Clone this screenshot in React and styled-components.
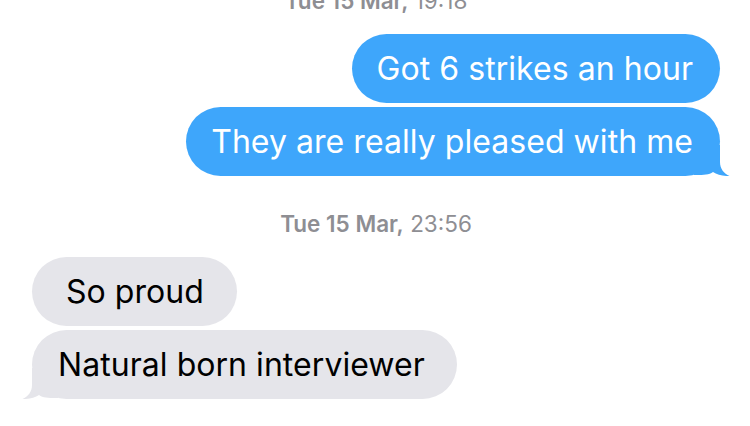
import React from "react";
import styled, { createGlobalStyle } from "styled-components";

const Global = createGlobalStyle`
  html, body { margin: 0; padding: 0; background: #ffffff; }
  body { font-family: Inter, "Noto Sans", "Liberation Sans", sans-serif; -webkit-font-smoothing: antialiased; }
`;

const Thread = styled.div`
  width: 750px;
  height: 426px;
  overflow: hidden;
  box-sizing: border-box;
  padding: 0 30px 0 32px;
  display: flex;
  flex-direction: column;
`;

const Stamp = styled.div`
  text-align: center;
  font-size: 22.5px;
  line-height: 26px;
  color: #8e8e93;
  margin: ${(p) => p.$margin};
  strong { font-weight: 600; }
`;

const Row = styled.div`
  display: flex;
  justify-content: ${(p) => (p.$out ? "flex-end" : "flex-start")};
  margin-top: ${(p) => p.$gap || 0}px;
`;

const Bubble = styled.div`
  position: relative;
  height: 69px;
  box-sizing: border-box;
  display: flex;
  align-items: center;
  padding: ${(p) => p.$pad || "0 27px 0 25px"};
  border-radius: 35px;
  font-size: 32px;
  letter-spacing: 0.05px;
  white-space: nowrap;
  background: ${(p) => (p.$out ? "#3ea6fb" : "#e5e5ea")};
  color: ${(p) => (p.$out ? "#ffffff" : "#000000")};
`;

const TailSvg = styled.svg`
  position: absolute;
  bottom: 0;
  width: 36px;
  height: 31px;
  ${(p) =>
    p.$out
      ? "right: -10px;"
      : "left: -10px; transform: scaleX(-1);"}
`;

function Tail({ out }) {
  return (
    <TailSvg $out={out} viewBox="0 0 36 31" aria-hidden="true">
      <path
        d="M0 0 H26 V17 C26 24 30 28.5 35.5 31 C29 31.3 23 29.8 19 27 C15 29.8 10 30 2 30 L0 30 Z"
        fill={out ? "#3ea6fb" : "#e5e5ea"}
      />
    </TailSvg>
  );
}

export default function App() {
  return (
    <>
      <Global />
      <Thread>
        <Stamp $margin="-12px 0 0 0">
          <strong>Tue 15 Mar,</strong> 19:18
        </Stamp>
        <Row $out $gap={20}>
          <Bubble $out>Got 6 strikes an hour</Bubble>
        </Row>
        <Row $out $gap={4}>
          <Bubble $out>
            They are really pleased with me
            <Tail out />
          </Bubble>
        </Row>
        <Stamp $margin="35px 0 0 0">
          <strong>Tue 15 Mar,</strong> 23:56
        </Stamp>
        <Row $gap={20}>
          <Bubble $pad="0 33px 0 34px">So proud</Bubble>
        </Row>
        <Row $gap={4}>
          <Bubble $pad="0 32px 0 26px">
            Natural born interviewer
            <Tail />
          </Bubble>
        </Row>
      </Thread>
    </>
  );
}
